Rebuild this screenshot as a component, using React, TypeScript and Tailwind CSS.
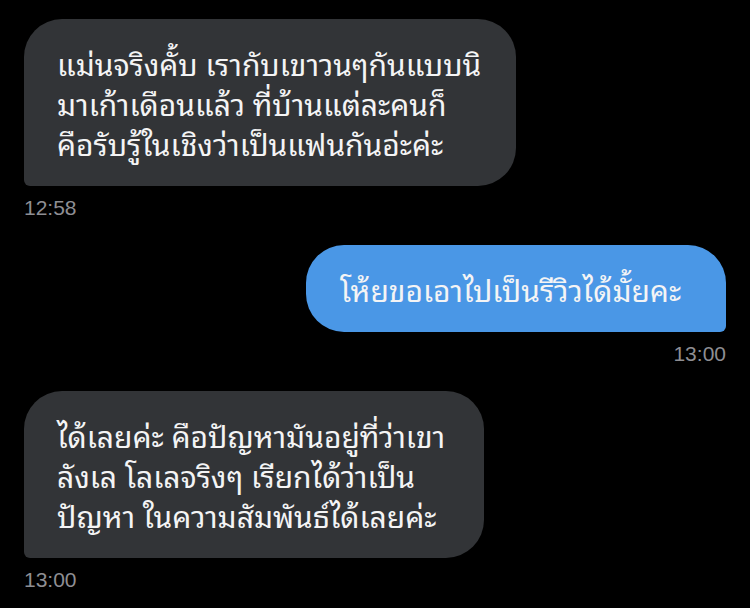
import React from "react";

const thai = "font-['Noto_Sans_Thai_Looped','Loma','Garuda','Noto_Sans_Thai',sans-serif]";
const meta = "font-['Liberation_Sans',Arial,sans-serif] text-[21px] leading-[24px] text-[#8e8e93]";

type Msg = { lines: string[]; time: string; width: string; mine?: boolean };

const messages: Msg[] = [
  {
    lines: ["แม่นจริงคั้บ เรากับเขาวนๆกันแบบนิ", "มาเก้าเดือนแล้ว ที่บ้านแต่ละคนก็", "คือรับรู้ในเชิงว่าเป็นแฟนกันอ่ะค่ะ"],
    time: "12:58",
    width: "w-[492px]",
  },
  { lines: ["โห้ยขอเอาไปเป็นรีวิวได้มั้ยคะ"], time: "13:00", width: "w-[420px]", mine: true },
  {
    lines: ["ได้เลยค่ะ คือปัญหามันอยู่ที่ว่าเขา", "ลังเล โลเลจริงๆ เรียกได้ว่าเป็น", "ปัญหา ในความสัมพันธ์ได้เลยค่ะ"],
    time: "13:00",
    width: "w-[460px]",
  },
];

export default function App() {
  return (
    <div className="w-[750px] h-[608px] bg-black overflow-hidden px-6 pt-[19px] flex flex-col gap-[25px]">
      {messages.map((m, i) => (
        <div key={i} className={`flex flex-col gap-[10px] ${m.mine ? "items-end" : "items-start"}`}>
          <div
            className={`${thai} ${m.width} text-[30px] leading-[40px] text-[#f4f4f5] rounded-[38px] pt-[24px] pb-[23px] ${
              m.mine
                ? "bg-[#4a97e6] rounded-br-[6px] px-[34px]"
                : "bg-[#323437] rounded-bl-[6px] px-[33px]"
            }`}
          >
            {m.lines.map((l, j) => (
              <div key={j} className="whitespace-nowrap">{l}</div>
            ))}
          </div>
          <div className={meta}>{m.time}</div>
        </div>
      ))}
    </div>
  );
}
